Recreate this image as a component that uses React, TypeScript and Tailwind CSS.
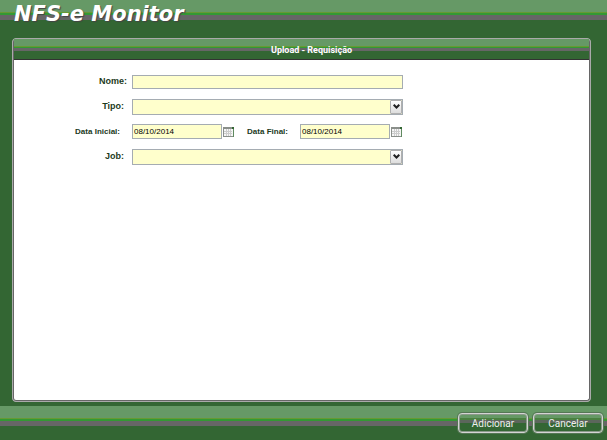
import { useState } from "react";
import type { ReactNode } from "react";

const STRIPE =
  "bg-[linear-gradient(to_bottom,#669966_0_12px,#669933_12px_13px,#339933_13px_15px,#666666_15px_20px,#336633_20px)]";

const INPUT =
  "rounded-none border border-[#a5acb2] bg-[#ffffcc] px-px text-[8px] font-normal text-black outline-none focus:border-[#336633]";

function CalendarIcon() {
  return (
    <svg className="h-[10px] w-[11px]" viewBox="0 0 11 10" shapeRendering="crispEdges" aria-hidden="true">
      <rect width="11" height="10" fill="#8a8f8a" />
      <rect x="1" y="2" width="9" height="7" fill="#f6f6f6" />
      <path d="M1 4.5h8M1 6.5h8M3.5 2v7M5.5 2v7M7.5 2v7" stroke="#cccccc" strokeWidth="1" />
      <rect x="10" y="1" width="1" height="9" fill="#5f8a5f" />
      <rect x="9" y="0" width="2" height="2" fill="#336633" />
    </svg>
  );
}

function Row({ id, label, labelClass = "pr-[5px]", children }: { id: string; label: string; labelClass?: string; children: ReactNode }) {
  return (
    <div className="flex h-[25px] items-center">
      <label htmlFor={id} className={`w-[118px] shrink-0 text-right ${labelClass}`}>
        {label}
      </label>
      {children}
    </div>
  );
}

function SelectBox({ id }: { id: string }) {
  return (
    <div className="relative h-4 w-[271px]">
      <select id={id} defaultValue="" className={`h-4 w-full appearance-none ${INPUT}`}>
        <option value="" />
      </select>
      <span className="pointer-events-none absolute top-px right-px flex h-[14px] w-3 items-center justify-center rounded-[1px] border border-[#b0b0b0] bg-linear-to-b from-white to-[#dddddd]">
        <svg className="h-[5px] w-[7px]" viewBox="0 0 7 5" fill="none" stroke="#222" strokeWidth="2" aria-hidden="true">
          <path d="M0.700 0.700 3.500 3.500 6.300 0.700" />
        </svg>
      </span>
    </div>
  );
}

function DateBox({ id, value, onChange }: { id: string; value: string; onChange: (v: string) => void }) {
  return (
    <div className="flex items-center gap-px">
      <input id={id} type="text" value={value} onChange={(e) => onChange(e.target.value)} className={`h-[15px] w-[90px] ${INPUT}`} />
      <button type="button" aria-label="Abrir calendário">
        <CalendarIcon />
      </button>
    </div>
  );
}

function BarButton({ children }: { children: ReactNode }) {
  return (
    <button
      type="button"
      className="h-5 w-[70px] rounded border border-[#d4d4d4] bg-[linear-gradient(to_bottom,#669966_0_4px,#4a8040_4px_6px,#5c665c_6px_9px,#336633_9px)] pt-0.5 font-['Roboto',sans-serif] text-[10px] leading-4 text-[#eeeeee] shadow-[0_0_0_1px_#557755,inset_0_0_0_1px_#8a9a8a]"
    >
      {children}
    </button>
  );
}

export default function App() {
  const [nome, setNome] = useState("");
  const [inicio, setInicio] = useState("08/10/2014");
  const [fim, setFim] = useState("08/10/2014");

  return (
    <div className="flex min-h-screen flex-col bg-[#336633] font-['Liberation_Sans',Arial,sans-serif]">
      <header className={`h-[38px] pl-3.5 ${STRIPE}`}>
        <h1 className="pt-0.5 font-['DejaVu_Sans',sans-serif] text-[21px] leading-6 font-bold text-white italic [text-shadow:1px_1px_1px_#444]">
          NFS-e Monitor
        </h1>
      </header>

      <main className="mr-4 mb-1 ml-3 flex flex-1 flex-col rounded border border-[#aaaaaa] bg-white">
        <div className="flex flex-1 flex-col rounded-[3px] border-x border-b border-[#666666]">
          <h2 className="h-[21px] border-b border-[#333333] bg-[linear-gradient(to_bottom,#669966_0_7px,#669933_7px_8px,#339933_8px_9px,#666666_9px_12px,#336633_12px)] pt-[5px] pl-5 text-center font-['Roboto',sans-serif] text-[9px] leading-3 font-bold text-white">
            Upload - Requisição
          </h2>

          <form className="pt-[9px] text-[9px] font-bold text-[#1c3a1c]">
            <Row id="nome" label="Nome:">
              <input id="nome" type="text" value={nome} onChange={(e) => setNome(e.target.value)} className={`h-[14px] w-[271px] ${INPUT}`} />
            </Row>
            <Row id="tipo" label="Tipo:" labelClass="pr-2">
              <SelectBox id="tipo" />
            </Row>
            <Row id="inicio" label="Data Inicial:" labelClass="pr-3 text-[8px]">
              <DateBox id="inicio" value={inicio} onChange={setInicio} />
              <label htmlFor="fim" className="w-[66px] shrink-0 pr-3 text-right text-[8px]">
                Data Final:
              </label>
              <DateBox id="fim" value={fim} onChange={setFim} />
            </Row>
            <Row id="job" label="Job:" labelClass="pr-2">
              <SelectBox id="job" />
            </Row>
          </form>
        </div>
      </main>

      <footer className={`flex h-[34px] justify-end gap-[5px] pt-[7px] pr-1 ${STRIPE}`}>
        <BarButton>Adicionar</BarButton>
        <BarButton>Cancelar</BarButton>
      </footer>
    </div>
  );
}
